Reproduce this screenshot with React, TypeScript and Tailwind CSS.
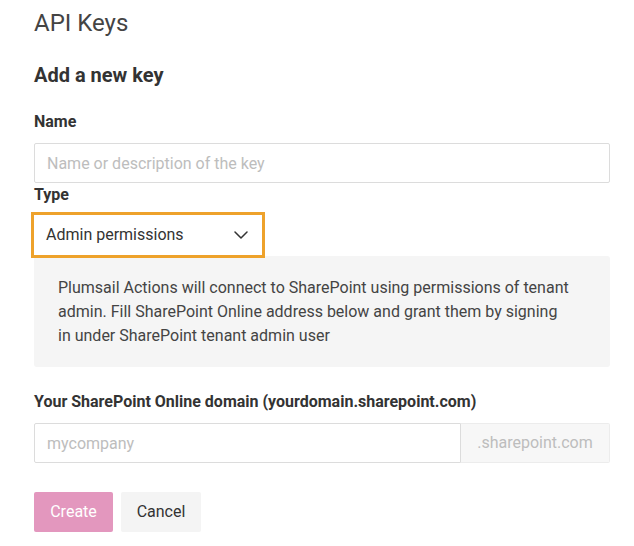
export default function App() {
  return (
    <div className="min-h-screen bg-white pl-[34px] pr-[24px] text-[#333] font-['Roboto',sans-serif]">
      <h1 className="pt-[7px] text-[24px] leading-[32px] font-normal text-[#444]">API Keys</h1>

      <h2 className="mt-[22px] text-[20px] leading-[28px] font-bold text-[#333]">Add a new key</h2>

      <label className="mt-[21px] block text-[16px] leading-[24px] font-bold">Name</label>
      <input
        className="mt-[9px] block h-[40px] w-[576px] rounded-[2px] border border-[#dcdcdc] px-[12px] text-[16px] outline-none placeholder:text-[#bdbdbd]"
        placeholder="Name or description of the key"
      />

      <label className="mt-0 block text-[16px] leading-[24px] font-bold">Type</label>
      <div className="relative z-10 mt-[8px] flex h-[40px] w-[228px] items-center justify-between bg-white pl-[12px] pr-[14px] outline-[3px] outline-solid outline-[#eea22b]">
        <span className="text-[16px] text-[#333]">Admin permissions</span>
        <svg width="14" height="8" viewBox="0 0 14 8" fill="none">
          <path d="M1 1l6 6 6-6" stroke="#333" strokeWidth="1.5" strokeLinecap="round" strokeLinejoin="round" />
        </svg>
      </div>

      <div className="mt-[1px] w-[576px] rounded-[3px] bg-[#f5f5f5] px-[24px] pt-[20px] pb-[19px]">
        <p className="max-w-[514px] text-[16px] leading-[24px] text-[#444]">
          Plumsail Actions will connect to SharePoint using permissions of tenant admin. Fill SharePoint Online address below and grant them by signing in under SharePoint tenant admin user
        </p>
      </div>

      <label className="mt-[23px] block text-[16px] leading-[24px] font-bold">
        Your SharePoint Online domain (yourdomain.sharepoint.com)
      </label>
      <div className="mt-[9px] flex h-[40px] w-[576px]">
        <input
          className="h-full min-w-0 flex-1 rounded-l-[2px] border border-[#dcdcdc] px-[12px] text-[16px] outline-none placeholder:text-[#bdbdbd]"
          placeholder="mycompany"
        />
        <div className="flex h-full w-[149px] items-center justify-center rounded-r-[2px] border border-l-0 border-[#ececec] bg-[#f7f7f7] text-[16px] text-[#bdbdbd]">
          .sharepoint.com
        </div>
      </div>

      <div className="mt-[29px] flex gap-[8px]">
        <button className="h-[40px] w-[79px] rounded-[2px] bg-[#e397be] text-[16px] text-white">Create</button>
        <button className="h-[40px] w-[80px] rounded-[2px] bg-[#f4f4f4] text-[16px] text-[#333]">Cancel</button>
      </div>
    </div>
  );
}
